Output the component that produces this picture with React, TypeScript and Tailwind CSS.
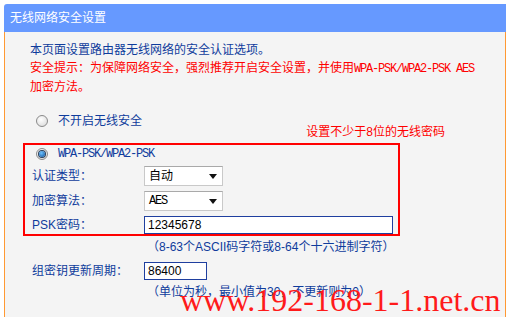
import React from "react";

const BLUE = "text-[#0f3c9c]";
const MONO = "font-['Liberation_Mono'] text-[12px] tracking-[-1.2px]";

function Radio({ checked }: { checked?: boolean }) {
  return (
    <span className="relative inline-flex h-[12px] w-[12px] items-center justify-center rounded-full border border-[#8a8a8a] bg-[radial-gradient(circle_at_40%_35%,#ffffff,#d6d6d6)]">
      {checked && (
        <span className="h-[6px] w-[6px] rounded-full bg-[radial-gradient(circle_at_40%_35%,#6fc3ff,#0b4f9a)] shadow-[0_0_0_1px_#2a3f5a]" />
      )}
    </span>
  );
}

function Select({ value, mono }: { value: string; mono?: boolean }) {
  return (
    <div className="flex h-[20px] w-[79px] items-center justify-between border border-[#c9c9c9] border-t-[#a9a9a9] bg-white pl-[4px] pr-[5px] text-black">
      <span className={mono ? MONO : "text-[12px]"}>{value}</span>
      <svg width="8" height="5" viewBox="0 0 8 5">
        <path d="M0 0h8L4 5z" fill="#111" />
      </svg>
    </div>
  );
}

export default function App() {
  return (
    <div className="relative h-[317px] w-[512px] overflow-hidden bg-white font-['Liberation_Sans','Noto_Sans_CJK_SC',sans-serif] text-[12px] leading-[18px]">
      <div className="ml-[4px] mt-[4px] w-[502px]">
        <div className="flex h-[28px] items-center rounded-tl-[3px] bg-[#6699ff] pl-[6px] text-[12px] text-white">
          无线网络安全设置
        </div>
        <div className="h-[290px] border-x border-[#ff9933] bg-[#f4f4f4] pt-[9px]">
          <div className="pl-[25px]">
            <div className={BLUE}>本页面设置路由器无线网络的安全认证选项。</div>
            <div className="text-[#ff0000]">
              安全提示：为保障网络安全，强烈推荐开启安全设置，并使用
              <span className={MONO}>WPA-PSK/WPA2-PSK AES</span>
              <br />
              加密方法。
            </div>
          </div>

          <div className="mt-[16px] flex h-[31px] items-start justify-between pl-[31px] pr-[60px]">
            <div className={`flex h-[18px] items-center gap-[10px] ${BLUE}`}>
              <Radio />
              <span>不开启无线安全</span>
            </div>
            <div className="self-end pb-[3px] text-[12px] leading-[16px] text-[#ff0000]">设置不少于8位的无线密码</div>
          </div>

          <div className="ml-[18px] h-[93px] w-[377px] border-2 border-[#ff0000]">
            <div className={`flex h-[18px] items-center gap-[10px] pl-[11px] ${BLUE}`}>
              <Radio checked />
              <span className={MONO}>WPA-PSK/WPA2-PSK</span>
            </div>
            <div className={`mt-[3px] grid grid-cols-[112px_1fr] items-center gap-y-[5px] pl-[7px] ${BLUE}`}>
              <span>认证类型：</span>
              <Select value="自动" />
              <span>加密算法：</span>
              <Select value="AES" mono />
              <span>PSK密码：</span>
              <div className="flex h-[18px] w-[249px] items-center border-[1.5px] border-[#1f3f9f] bg-white pl-[3px] text-black">
                12345678
              </div>
            </div>
          </div>

          <div className={`ml-[142px] mt-[2px] ${BLUE}`}>（8-63个ASCII码字符或8-64个十六进制字符）</div>

          <div className={`mt-[6px] grid grid-cols-[112px_1fr] items-center pl-[27px] ${BLUE}`}>
            <span>组密钥更新周期：</span>
            <div className="flex h-[18px] w-[63px] items-center border-[1.5px] border-[#1f3f9f] bg-white pl-[3px] text-black">
              86400
            </div>
          </div>

          <div className={`ml-[142px] mt-[3px] ${BLUE}`}>（单位为秒，最小值为30，不更新则为0）</div>
        </div>
      </div>

      <div className="absolute left-[180px] top-[282px] whitespace-nowrap font-['Liberation_Serif'] text-[32px] leading-[36px] text-[#ff1a1a]">
        www.192-168-1-1.net.cn
      </div>
    </div>
  );
}
